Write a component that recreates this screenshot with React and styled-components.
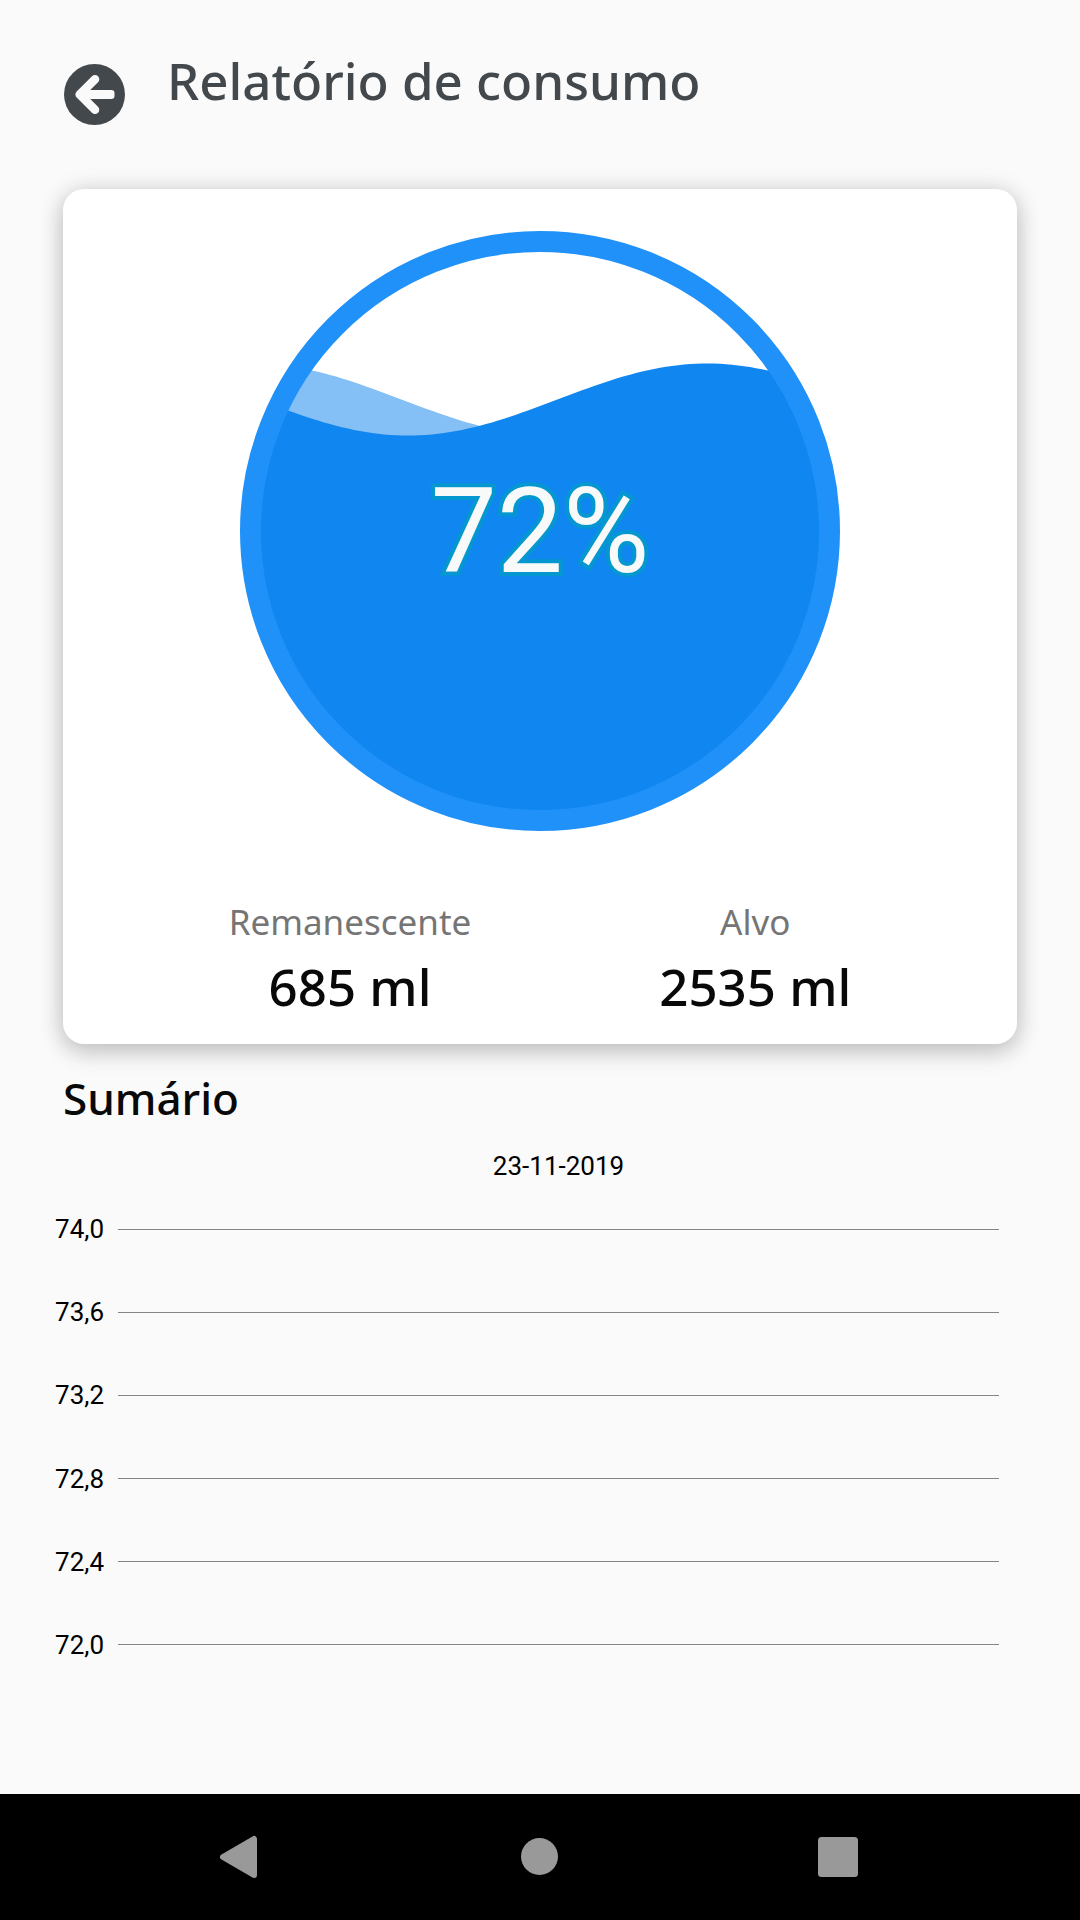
import React from "react";
import styled, { createGlobalStyle } from "styled-components";

const GlobalStyle = createGlobalStyle`
  *, *::before, *::after { box-sizing: border-box; }
  html, body { margin: 0; background: #fafafa; }
`;

const Screen = styled.div`
  min-height: 100vh;
  display: flex;
  flex-direction: column;
  background: #fafafa;
  color: #090909;
  font-family: "Noto Sans", "Open Sans", sans-serif;
`;

const Header = styled.header`
  display: flex;
  align-items: flex-start;
  gap: 42px;
  padding: 48px 64px 0;
`;

const BackButton = styled.button`
  display: block;
  flex: none;
  margin: 16px 0 0;
  padding: 0;
  border: 0;
  background: none;
  color: #43484c;
  cursor: pointer;
  svg { display: block; width: 61px; height: 61px; }
`;

const Title = styled.h1`
  margin: 0;
  color: #43484c;
  font-size: 51px;
  line-height: 64px;
  font-weight: 500;
`;

const Main = styled.main`
  flex: 1;
  display: flex;
  flex-direction: column;
  padding-top: 64px;
`;

const Card = styled.section`
  display: flex;
  flex-direction: column;
  align-items: center;
  gap: 64px;
  margin: 0 63px;
  padding: 42px 20px 26px;
  border-radius: 21px;
  background: #fff;
  box-shadow: 0 8px 24px rgba(0, 0, 0, 0.2), 0 0 24px rgba(0, 0, 0, 0.1);
`;

const Gauge = styled.div`
  display: grid;
  place-items: center;
  width: 100%;
  max-width: 600px;
  > * { grid-area: 1 / 1; }
  svg { display: block; width: 100%; }
`;

const Percent = styled.span`
  z-index: 1;
  padding-top: 2px;
  color: #f8faf9;
  font-family: Roboto, sans-serif;
  font-size: 118px;
  line-height: 140px;
  -webkit-text-stroke: 8px #0597cf;
  paint-order: stroke fill;
`;

const Stats = styled.dl`
  display: flex;
  justify-content: center;
  gap: 188px;
  margin: 0;
`;

const Stat = styled.div`
  display: flex;
  flex-direction: column;
  align-items: center;
  gap: 5px;
`;

const StatLabel = styled.dt`
  color: #757575;
  font-size: 35px;
  line-height: 54px;
`;

const StatValue = styled.dd`
  margin: 0;
  font-size: 51px;
  line-height: 64px;
  font-weight: 500;
`;

const SectionTitle = styled.h2`
  margin: 22px 63px 0;
  font-size: 44px;
  line-height: 64px;
  font-weight: 500;
`;

const Chart = styled.figure`
  display: flex;
  flex-direction: column;
  gap: 31px;
  margin: 20px 81px 0 55px;
  color: #000;
  font-family: Roboto, sans-serif;
  font-size: 26px;
  line-height: 32px;
`;

const ChartDate = styled.figcaption`
  padding-left: 63px;
  text-align: center;
`;

const Axis = styled.div`
  display: flex;
  flex-direction: column;
  justify-content: space-between;
  height: 448px;
`;

const Tick = styled.div`
  display: grid;
  grid-template-columns: 49px 1fr;
  gap: 14px;
  align-items: center;
`;

const TickLabel = styled.span`
  text-align: right;
`;

const GridLine = styled.span`
  height: 1px;
  background: #858585;
`;

const NavBar = styled.nav`
  display: grid;
  grid-template-columns: repeat(3, 300px);
  justify-content: center;
  align-items: center;
  height: 126px;
  background: #000;
`;

const NavButton = styled.button`
  justify-self: center;
  padding: 0;
  border: 0;
  background: none;
  color: #999;
  cursor: pointer;
  svg { display: block; width: 48px; height: 48px; }
`;

// Surface of the water: a sine line across the gauge, closed at the bottom.
function wavePath(peakX) {
  const points = [];
  for (let x = 0; x <= 600; x += 6) {
    const y = 168.5 - 36 * Math.cos((2 * Math.PI * (x - peakX)) / 598);
    points.push(`${x} ${y.toFixed(1)}`);
  }
  return `M${points.join("L")}V600H0Z`;
}

const STATS = [
  { label: "Remanescente", value: "685 ml" },
  { label: "Alvo", value: "2535 ml" },
];

const TICKS = ["74,0", "73,6", "73,2", "72,8", "72,4", "72,0"];

export default function App() {
  return (
    <Screen>
      <GlobalStyle />
      <Header>
        <BackButton type="button" aria-label="Voltar">
          <svg viewBox="0 0 61 61" aria-hidden="true">
            <circle cx="30.5" cy="30.5" r="30.5" fill="currentColor" />
            <path
              d="M31 15.2L15.7 30.5L31 45.8"
              fill="none"
              stroke="#fafafa"
              strokeWidth="8.6"
              strokeLinecap="round"
              strokeLinejoin="round"
            />
            <rect x="16" y="26" width="34.5" height="9" rx="3.2" fill="#fafafa" />
          </svg>
        </BackButton>
        <Title>Relatório de consumo</Title>
      </Header>

      <Main>
        <Card>
          <Gauge>
            <svg viewBox="0 0 600 600" aria-hidden="true">
              <defs>
                <clipPath id="tank">
                  <circle cx="300" cy="300" r="290" />
                </clipPath>
              </defs>
              <g clipPath="url(#tank)">
                <path d={wavePath(12)} fill="#84bff5" />
                <path d={wavePath(467)} fill="#0f86f0" />
              </g>
              <circle cx="300" cy="300" r="289.5" fill="none" stroke="#2091f8" strokeWidth="21" />
            </svg>
            <Percent>72%</Percent>
          </Gauge>
          <Stats>
            {STATS.map((s) => (
              <Stat key={s.label}>
                <StatLabel>{s.label}</StatLabel>
                <StatValue>{s.value}</StatValue>
              </Stat>
            ))}
          </Stats>
        </Card>

        <SectionTitle>Sumário</SectionTitle>

        <Chart>
          <ChartDate>23-11-2019</ChartDate>
          <Axis>
            {TICKS.map((t) => (
              <Tick key={t}>
                <TickLabel>{t}</TickLabel>
                <GridLine />
              </Tick>
            ))}
          </Axis>
        </Chart>
      </Main>

      <NavBar>
        <NavButton type="button" aria-label="Voltar">
          <svg viewBox="0 0 48 48" aria-hidden="true">
            <path
              d="M7 24L38 6V42Z"
              fill="currentColor"
              stroke="currentColor"
              strokeWidth="6"
              strokeLinejoin="round"
            />
          </svg>
        </NavButton>
        <NavButton type="button" aria-label="Início">
          <svg viewBox="0 0 48 48" aria-hidden="true">
            <circle cx="23.5" cy="23.5" r="18.5" fill="currentColor" />
          </svg>
        </NavButton>
        <NavButton type="button" aria-label="Recentes">
          <svg viewBox="0 0 48 48" aria-hidden="true">
            <rect x="2" y="4" width="40" height="40" rx="3.5" fill="currentColor" />
          </svg>
        </NavButton>
      </NavBar>
    </Screen>
  );
}
